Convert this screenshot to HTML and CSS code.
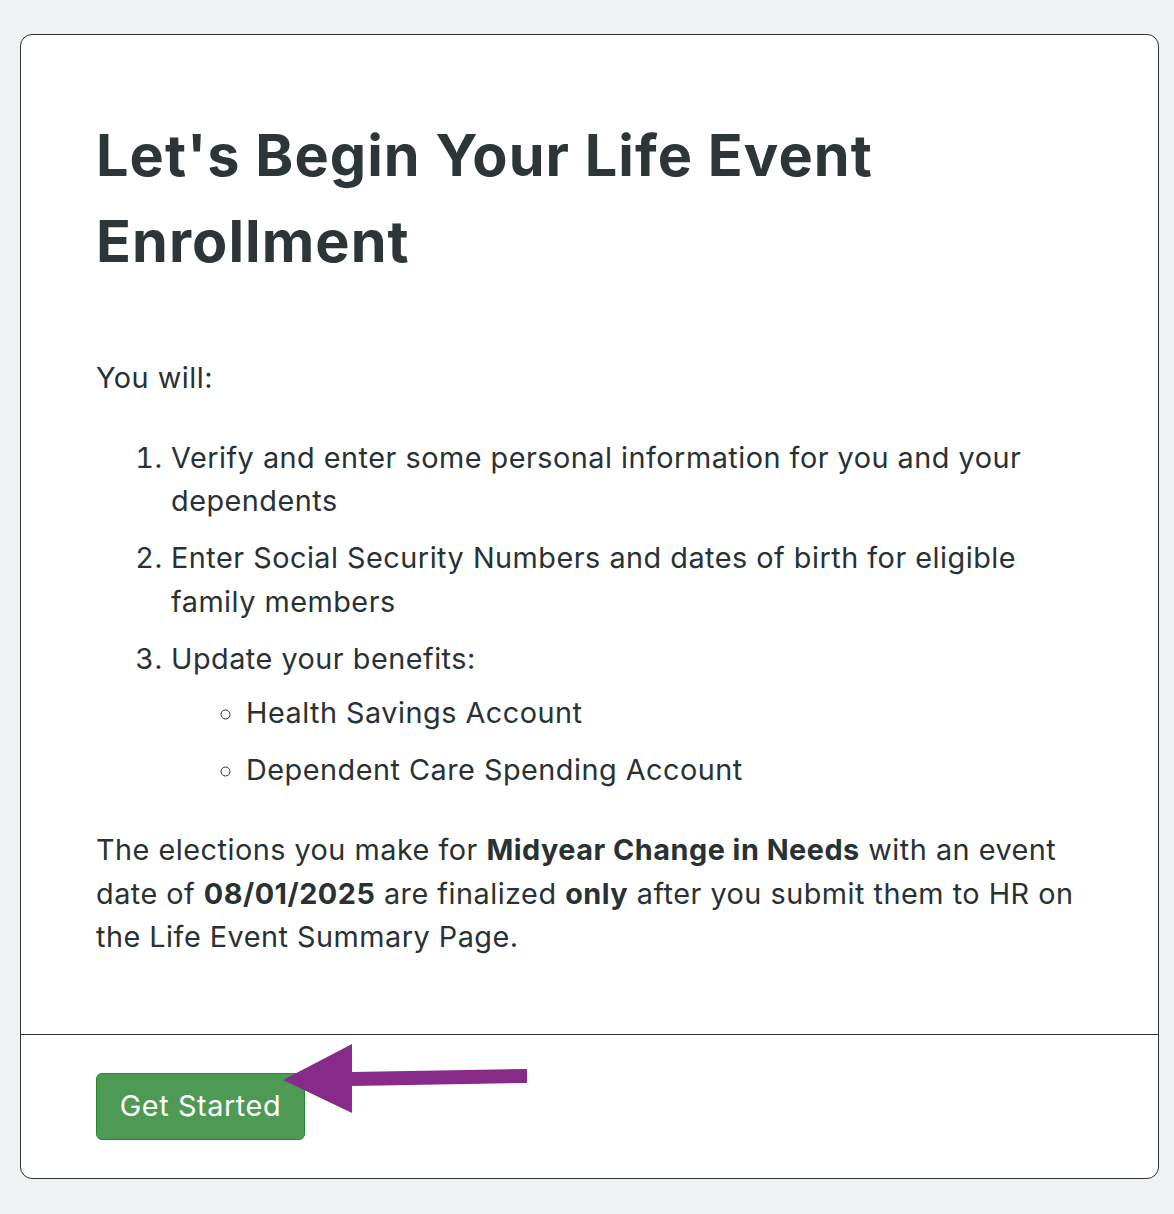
FILE: index.html
```html
<!DOCTYPE html>
<html lang="en">
<head>
<meta charset="utf-8">
<title>Life Event Enrollment</title>
<link rel="stylesheet" href="styles.css">
</head>
<body>
<div class="card">
  <div class="card-body">
    <h1 class="title">Let's Begin Your Life Event Enrollment</h1>
    <p class="intro">You will:</p>
    <ol class="steps">
      <li>Verify and enter some personal information for you and your dependents</li>
      <li>Enter Social Security Numbers and dates of birth for eligible family members</li>
      <li>Update your benefits:
        <ul class="benefits">
          <li>Health Savings Account</li>
          <li>Dependent Care Spending Account</li>
        </ul>
      </li>
    </ol>
    <p class="note">The elections you make for <strong>Midyear Change in Needs</strong> with an event date of <strong>08/01/2025</strong> are finalized <strong>only</strong> after you submit them to HR on the Life Event Summary Page.</p>
  </div>
  <div class="card-footer">
    <button class="btn-start" type="button">Get Started</button>
    <svg class="arrow" width="250" height="76" viewBox="0 0 250 76" aria-hidden="true">
      <polygon points="3,40 72,4 72,32 247,29 247,43 72,46 72,73" fill="#872a8a"/>
    </svg>
  </div>
</div>
</body>
</html>
```
FILE: styles.css
```css
html, body {
  margin: 0;
  padding: 0;
  background: #f1f2f4;
}
body {
  padding: 34px 15px 34px 20px;
  font-family: Inter, "Noto Sans", "Liberation Sans", sans-serif;
  color: #283134;
  font-size: 28.8px;
  line-height: 1.5;
  letter-spacing: 0.5px;
}
.card {
  background: #fff;
  border: 1px solid #2d3436;
  border-radius: 12px;
}
.card-body {
  padding: 48px 77px 76px 75px;
}
.title {
  font-size: 57.6px;
  line-height: 86.4px;
  font-weight: 700;
  color: #2d3538;
  margin: 29px 0 71px;
  letter-spacing: 1.05px;
}
.intro {
  margin: 0;
}
.steps {
  margin: 37px 0 0;
  padding-left: 75px;
}
.steps > li {
  margin-bottom: 14px;
}
.steps > li:last-child {
  margin-bottom: 0;
}
.benefits {
  list-style-type: circle;
  margin: 11px 0 0;
  padding-left: 75px;
}
.benefits li {
  margin-bottom: 14px;
}
.benefits li:last-child {
  margin-bottom: 0;
}
.note {
  margin: 37px 0 0;
}
.note strong {
  font-weight: 700;
}
.card-footer {
  position: relative;
  border-top: 1px solid #2d3436;
  padding: 38px 76px 38px 75px;
}
.btn-start {
  display: block;
  height: 67px;
  width: 209px;
  padding: 0;
  background: #4e9a55;
  border: 1px solid #208a2c;
  border-radius: 6px;
  color: #fff;
  font-family: Inter, "Noto Sans", "Liberation Sans", sans-serif;
  font-size: 28.8px;
  line-height: 1;
  letter-spacing: 0.6px;
}
.arrow {
  position: absolute;
  left: 259px;
  top: 5px;
}
```
